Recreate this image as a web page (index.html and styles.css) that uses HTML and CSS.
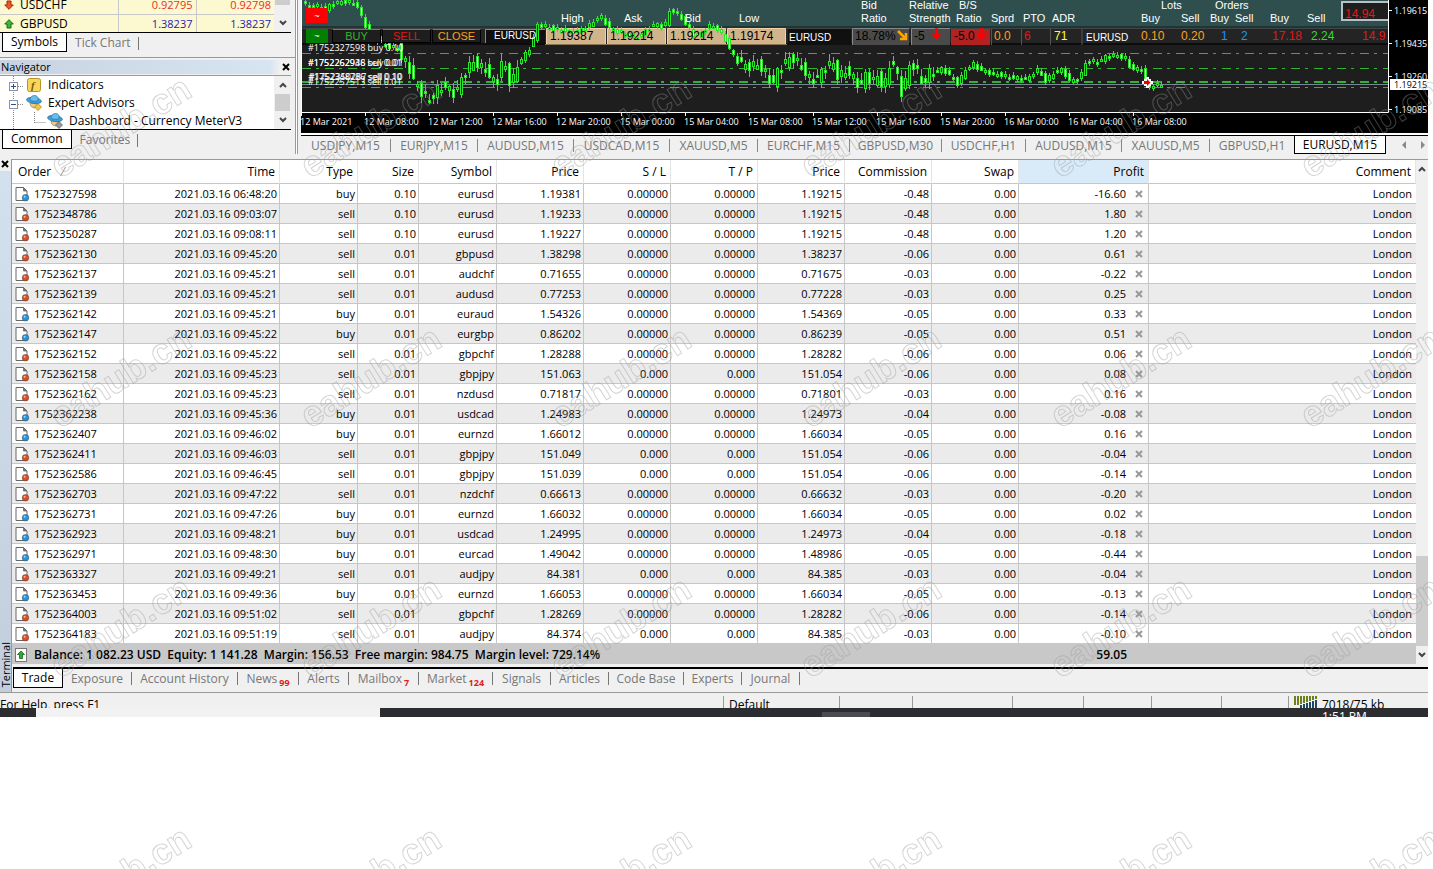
FILE: index.html
```html
<!DOCTYPE html>
<html lang="en">
<head>
<meta charset="utf-8">
<title>Trading terminal</title>
<link rel="stylesheet" href="styles.css">
</head>
<body>
<svg class="defs" aria-hidden="true">
  <symbol id="up" viewBox="0 0 10 10"><path d="M5 .7 9.3 5H7v4H3V5H.7z" fill="#3db53d" stroke="#176b17"/></symbol>
  <symbol id="down" viewBox="0 0 10 10"><path d="M5 9.3 .7 5H3V1h4v4h2.300z" fill="#f0542a" stroke="#a02808"/></symbol>
  <symbol id="chev-up" viewBox="0 0 8 6"><path d="M1 5 4 2 7 5" fill="none" stroke="#444" stroke-width="2"/></symbol>
  <symbol id="chev-down" viewBox="0 0 8 6"><path d="M1 1 4 4 7 1" fill="none" stroke="#444" stroke-width="2"/></symbol>
  <symbol id="close" viewBox="0 0 8 8"><path d="M1 1 7 7M7 1 1 7" fill="none" stroke="currentColor" stroke-width="2"/></symbol>
  <symbol id="advisor" viewBox="0 0 16 16">
    <path d="M4 8c0 3 2 5 5 5l3-5z" fill="#e8c98a" stroke="#8f7440" stroke-width=".6"/>
    <ellipse cx="8" cy="5.500" rx="7.500" ry="3" transform="rotate(8 8 5.500)" fill="#3f9fd6" stroke="#1f6d9d" stroke-width=".7"/>
    <path d="M4 5c0-3 2-4.500 4.500-4.500S12.500 2 12 5.500C10 6.800 6 6.600 4 5z" fill="#68bdeb" stroke="#1f6d9d" stroke-width=".6"/>
  </symbol>
  <symbol id="order" viewBox="0 0 15 16">
    <path d="M1 1.500h7.500L12 5v9.500H1z" fill="#fff" stroke="#666"/>
    <path d="M8.500 1.500V5H12z" fill="#777" stroke="#666" stroke-width=".8"/>
    <circle cx="10.500" cy="11.800" r="3.300" fill="currentColor" stroke="#444" stroke-width=".5"/>
    <circle cx="9.600" cy="10.700" r="1" fill="#fff" opacity=".6"/>
  </symbol>
</svg>

<div class="app">
  <div class="upper">
    <aside class="side">
      <section class="watch">
        <div class="pane">
          <table class="quotes">
            <colgroup><col><col class="q"><col class="q"></colgroup>
            <tr class="red"><th scope="row"><svg class="i10"><use href="#down"/></svg>USDCHF</th><td>0.92795</td><td>0.92798</td></tr>
            <tr class="blue"><th scope="row"><svg class="i10"><use href="#up"/></svg>GBPUSD</th><td>1.38237</td><td>1.38237</td></tr>
          </table>
          <div class="scroll"><span class="thumb short"></span><button aria-label="Scroll down"><svg class="chev"><use href="#chev-down"/></svg></button></div>
        </div>
        <nav class="tabs"><button class="on">Symbols</button><button>Tick Chart</button></nav>
      </section>
      <section class="navigator">
        <header><h2>Navigator</h2><button aria-label="Close navigator"><svg class="i8"><use href="#close"/></svg></button></header>
        <div class="pane">
          <div class="tree">
            <div class="node"><svg class="branch" viewBox="0 0 26 18"><path d="M13.500 0V18M18 10.500h6" class="dots"/><rect x="9.500" y="6.500" width="8" height="8" fill="#fff" stroke="#8a94a8"/><path d="M11 10.500h5M13.500 8v5" stroke="#33507f"/></svg><svg class="i16" viewBox="0 0 16 16"><rect x="1.500" y="1.500" width="13" height="13" rx="2" fill="#f7d65c" stroke="#b8912a"/><text x="5" y="12" class="fx">f</text></svg><span>Indicators</span></div>
            <div class="node"><svg class="branch" viewBox="0 0 26 18"><path d="M13.500 0V18M18 10.500h6" class="dots"/><rect x="9.500" y="6.500" width="8" height="8" fill="#fff" stroke="#8a94a8"/><path d="M11 10.500h5" stroke="#33507f"/></svg><svg class="i16" viewBox="0 0 16 16"><use href="#advisor"/><path d="M12 8.500 15.500 12 12 15.500 8.500 12z" fill="#f3c544" stroke="#a07b16" stroke-width=".7"/></svg><span>Expert Advisors</span></div>
            <div class="node"><svg class="branch deep" viewBox="0 0 47 18"><path d="M13.500 0V18M34.500 0V11M34.500 10.500h11" class="dots"/></svg><svg class="i16" viewBox="0 0 16 16"><use href="#advisor"/><path d="M12 8.500 15.500 12 12 15.500 8.500 12z" fill="#999" stroke="#555" stroke-width=".7"/></svg><span>Dashboard - Currency MeterV3</span></div>
          </div>
          <div class="scroll"><button aria-label="Scroll up"><svg class="chev"><use href="#chev-up"/></svg></button><span class="thumb"></span><button aria-label="Scroll down"><svg class="chev"><use href="#chev-down"/></svg></button></div>
        </div>
        <nav class="tabs"><button class="on">Common</button><button>Favorites</button></nav>
      </section>
    </aside>

    <main class="charts">
      <div class="chart">
        <svg class="plot" width="1127" height="133" viewBox="301 0 1127 133">
          <rect x="301" y="0" width="1127" height="133" fill="#000"/>
          <rect x="302" y="0" width="1086" height="112" fill="#1e1e1e"/>
          <rect x="302" y="0" width="1086" height="27" fill="#2f4f4f"/>
          <rect x="302" y="26" width="1086" height="2" fill="#1f3636"/>
          <rect x="302" y="28" width="1086" height="16" fill="#242424"/>
          <path d="M302 28.500H1388" stroke="#444"/>
          <path d="M302 44H1388" stroke="#0c0c0c" stroke-width="2"/>
          <g class="order-lines"><path d="M302 53.500H1388M302 68.500H1388M302 87.500H1388"/><path d="M302 82H1388" stroke-width="2"/></g>
          <path d="M302 84.500H1388" stroke="#778899"/>
          <g fill="#d2b48c" stroke="#f0d2a6"><path d="M546.500 28.500h59v16h-59zM607.500 28.500h58v16h-58zM667.500 28.500h58v16h-58zM727.500 28.500h58v16h-58z"/></g>
          <path d="M545 44.500H787" stroke="#8a7454"/>
          <path d="M486 29h59v14h-59zM788 29h63v16h-63z" fill="#101010"/>
          <path d="M852 29h57v16h-57zM912 29h38v16h-38z" fill="#4a4a4a"/>
          <path d="M852.500 45V28.500H909M911.500 45V28.500H950" fill="none" stroke="#888"/>
          <path d="M951 29h39v16h-39z" fill="#b22222"/>
          <path d="M991.500 29V45M1021.500 29V45M1050.500 29V45M1082 29V45" stroke="#555"/>
          <path d="M485.500 43V29.500H545" fill="none" stroke="#888"/>
          <g id="candles"></g>
          <path d="M301.500 0V112.500H1388.500V0" class="frame"/>
          <g class="head">
            <text x="561" y="22">High</text><text x="624" y="22">Ask</text><text x="685" y="22">Bid</text><text x="739" y="22">Low</text>
            <text x="861" y="9">Bid</text><text x="861" y="22">Ratio</text><text x="909" y="9">Relative</text><text x="909" y="22">Strength</text>
            <text x="959" y="9">B/S</text><text x="956" y="22">Ratio</text><text x="991" y="22">Sprd</text><text x="1023" y="22">PTO</text><text x="1052" y="22">ADR</text>
            <text x="1161" y="9">Lots</text><text x="1215" y="9">Orders</text><text x="1141" y="22">Buy</text><text x="1181" y="22">Sell</text><text x="1210" y="22">Buy</text><text x="1235" y="22">Sell</text><text x="1270" y="22">Buy</text><text x="1307" y="22">Sell</text>
          </g>
          <g class="pair"><text x="494" y="39">EURUSD</text><text x="789" y="41">EURUSD</text><text x="1086" y="41">EURUSD</text></g>
          <g class="val">
            <text x="550" y="40">1.19387</text><text x="610" y="40">1.19214</text><text x="670" y="40">1.19214</text><text x="730" y="40">1.19174</text>
            <text x="855" y="40">18.78%</text><text x="914" y="40">-5</text><text x="954" y="40">-5.0</text>
            <text x="994" y="40" class="orange">0.0</text><text x="1024" y="40" class="crimson">6</text><text x="1054" y="40" class="yellow">71</text>
            <text x="1141" y="40" class="orange">0.10</text><text x="1181" y="40" class="orange">0.20</text><text x="1221" y="40" class="azure">1</text><text x="1241" y="40" class="azure">2</text>
            <text x="1272" y="40" class="crimson">17.18</text><text x="1311" y="40" class="lime">2.24</text><text x="1362" y="40" class="crimson">14.9</text>
          </g>
          <path d="M898 31 905 38M906 33V39H900" fill="none" stroke="#ffa500" stroke-width="2.500"/>
          <path d="M936.500 28V37M933 34 936.500 38 940 34M981.500 28V37M978 34 981.500 38 985 34" fill="none" stroke="#f00" stroke-width="2.500"/>
          <rect x="1342" y="2" width="48" height="18" fill="#1e1e1e" stroke="#b9bfc6" stroke-width="2"/>
          <rect x="1389" y="0" width="39" height="132" fill="#000"/>
          <path d="M1388.500 0V112" class="frame"/>
          <text x="1345" y="18" class="val crimson">14.94</text>
          <g class="tiny">
            <text x="308" y="51">#1752327598 buy 0.10</text>
            <text x="308" y="66">#1752262938 buy 0.01</text><text x="308" y="66">#1752262946 sell 0.01</text>
            <text x="308" y="80">#1752348786 sell 0.10</text><text x="309" y="80">#1752350287 sell 0.10</text><text x="308" y="85">#1752257513 sell 0.01</text>
          </g>
          <path d="M1142 81h2v-2h2v-2h3v2h2v2h2v3h-2v2h-2v2h-3v-2h-2v-2h-2z" fill="#fff"/><path d="M1144 81h3v-2l3.500 3.500-3.500 3.500v-2h-3z" fill="#e00"/>
          <g class="tiny" id="times"></g>
          <path d="M1389 10.500h3M1389 43.500h3M1389 76.500h3M1389 109.500h3" stroke="#fff"/>
          <g class="tiny"><text x="1394" y="14">1.19615</text><text x="1394" y="47">1.19435</text><text x="1394" y="80">1.19260</text><text x="1394" y="113">1.19085</text></g>
          <rect x="1390" y="79" width="38" height="11" fill="#fff"/><text x="1394" y="88" class="tiny dark">1.19215</text>
        </svg>
        <button class="toggle red-bg">~</button>
        <div class="trade-bar"><button class="toggle green-bg">~</button><button class="lime">BUY</button><button class="crimson">SELL</button><button class="orange">CLOSE</button></div>
      </div>
      <nav class="chart-tabs">
        <button>USDJPY,M15</button><button>EURJPY,M15</button><button>AUDUSD,M15</button><button>USDCAD,M15</button><button>XAUUSD,M5</button><button>EURCHF,M15</button><button>GBPUSD,M30</button><button>USDCHF,H1</button><button>AUDUSD,M15</button><button>XAUUSD,M5</button><button class="last">GBPUSD,H1</button><button class="on">EURUSD,M15</button>
        <svg class="arrows" viewBox="0 0 26 8"><path d="M4 0V8L0 4zM19 0V8L23 4z" fill="#888"/></svg>
      </nav>
    </main>
  </div>

  <section class="terminal">
    <div class="grip"><button aria-label="Close terminal"><svg class="i8"><use href="#close"/></svg></button><span>Terminal</span></div>
    <div class="body">
      <div class="grid-wrap">
        <table class="orders">
          <colgroup><col class="c-order"><col class="c-time"><col class="c-mid"><col class="c-size"><col class="c-mid"><col class="c-num"><col class="c-num"><col class="c-num"><col class="c-num"><col class="c-num"><col class="c-num"><col class="c-profit"><col></colgroup>
          <thead><tr><th>Order <span class="sort">⁄</span></th><th>Time</th><th>Type</th><th>Size</th><th>Symbol</th><th>Price</th><th>S / L</th><th>T / P</th><th>Price</th><th>Commission</th><th>Swap</th><th class="picked">Profit</th><th>Comment</th></tr></thead>
          <tbody id="rows"></tbody>
          <tfoot><tr><td colspan="11"><svg class="i14" viewBox="0 0 13 14"><rect x=".5" y=".5" width="11" height="13" fill="#fff" stroke="#777"/><path d="M6 3 9.500 6.500H7.500V10.500H4.500V6.500H2.500z" fill="#2fae2f" stroke="#126112" stroke-width=".8"/></svg><span>Balance: 1 082.23 USD&nbsp; Equity: 1 141.28&nbsp; Margin: 156.53&nbsp; Free margin: 984.75&nbsp; Margin level: 729.14%</span></td><td class="sum">59.05</td><td></td></tr></tfoot>
        </table>
        <div class="scroll tall"><button aria-label="Scroll up"><svg class="chev"><use href="#chev-up"/></svg></button><span class="thumb"></span><button aria-label="Scroll down"><svg class="chev"><use href="#chev-down"/></svg></button></div>
      </div>
      <nav class="term-tabs">
        <button class="on">Trade</button><button>Exposure</button><button>Account History</button><button>News<sub>99</sub></button><button>Alerts</button><button>Mailbox<sub>7</sub></button><button>Market<sub>124</sub></button><button>Signals</button><button>Articles</button><button>Code Base</button><button>Experts</button><button>Journal</button>
      </nav>
    </div>
  </section>

  <footer class="status"><span>For Help, press F1</span><span>Default</span><span></span><span></span><span></span><span></span><span></span><span></span><span class="net"><svg width="24" height="12" viewBox="0 0 24 12"><path d="M1 0V9M4 0V9M7 0V8M10 0V7M13 0V6M16 0V5M19 0V4M22 0V3" stroke="#6b7f1a" stroke-width="2"/><path d="M7 9V12M10 8V12M13 7V12M16 6V12M19 5V12M22 4V12" stroke="#1c4a66" stroke-width="2"/></svg>7018/75 kb</span></footer>
  <div class="taskbar"><div class="search"></div><div class="apps"><svg width="640" height="9" viewBox="380 0 640 9"><path d="M497 9a6 4 0 0 1 12 0z" fill="#5fc4d6"/><path d="M595 8h11v1h-11z" fill="#ddd"/><path d="M785 8h24v1h-24zM882 8h24v1h-24z" fill="#000"/><path d="M822 0h48v9h-48z" fill="#4a4d50"/><path d="M841 8h9v1h-9z" fill="#ccc"/><path d="M932 8h24v1h-24z" fill="#6a7d4a"/></svg></div><time>1:51 PM</time></div>
</div>

<svg class="marks" aria-hidden="true">
  <defs><pattern id="mark" x="30" y="0" width="250" height="250" patternUnits="userSpaceOnUse"><text transform="translate(30 179) rotate(-32)">eahub.cn</text></pattern></defs>
  <rect width="100%" height="100%" fill="url(#mark)"/>
</svg>
<script src="app.js"></script>
</body>
</html>
```
FILE: styles.css
```css
* { box-sizing: border-box; }
body { margin: 0; position: relative; min-height: 100vh; background: #fff; color: #000; font: 11px/18px "Open Sans", "Noto Sans", sans-serif; overflow: hidden; }
button { font: inherit; color: inherit; background: none; border: 0; padding: 0; margin: 0; }
table { border-collapse: collapse; table-layout: fixed; width: 100%; }
th { font-weight: 400; }
.defs { position: absolute; width: 0; height: 0; }
.app { padding-right: 5px; }
.i8 { width: 8px; height: 8px; display: block; }
.i10 { width: 10px; height: 10px; }
.i14 { width: 13px; height: 14px; }
.i16 { width: 16px; height: 16px; }
.chev { width: 8px; height: 6px; display: block; }

.upper { display: flex; background: #f0f0f0; }
.side { width: 297px; flex: none; border-right: 1px solid #fff; box-shadow: inset -1px 0 #999; overflow: hidden; }
.watch { padding-right: 5px; border-bottom: 1px solid #999; height: 58px; }
.pane { display: flex; border-bottom: 1px solid #000; background: #fff; overflow: hidden; }
.watch .pane { height: 33px; align-items: flex-end; background: #fcf8d0; }
.quotes { flex: 1; background: #fcf8d0; }
.quotes .q { width: 78px; }
.quotes tr { height: 18px; }
.quotes th { padding: 0 0 0 4px; text-align: left; font-size: 12px; line-height: 17px; white-space: nowrap; }
.quotes th svg { margin-right: 6px; vertical-align: -1px; }
.quotes td { padding: 0 3px 0 0; text-align: right; line-height: 17px; border-left: 1px solid #c8c8c8; }
.quotes tr + tr > * { border-top: 1px solid #c8c8c8; }
.red td { color: #e8301c; }
.blue td { color: #2518b8; }
.scroll { width: 17px; flex: none; align-self: stretch; background: #f0f0f0; display: flex; flex-direction: column; align-items: center; justify-content: space-between; }
.scroll button { height: 18px; width: 100%; display: grid; place-items: center; }
.scroll .thumb { width: 15px; height: 17px; background: #cdcdcd; }
.scroll .short { height: 5px; }
.tabs { display: flex; padding-left: 2px; font-size: 12px; line-height: 18px; color: #777; }
.tabs button { padding: 0 8px; position: relative; }
.tabs button:not(.on)::after { content: ""; position: absolute; right: 0; top: 4px; bottom: 2px; border-right: 1px solid #777; }
.on { background: #fff; color: #000; border: 1px solid #000; border-top: 0; }
.navigator header { display: flex; align-items: center; justify-content: space-between; margin: 2px 0 1px; height: 14px; background: linear-gradient(90deg, #c7d3e1, #d7e4f2 270px, #f0f0f0 280px); }
.navigator { padding-right: 5px; }
.navigator header button { padding: 0 1px; }
.navigator h2 { margin: 0; padding-left: 1px; font: 11px/14px "Open Sans", sans-serif; }
.navigator .pane { height: 55px; border-top: 1px solid #999; }
.tree { flex: 1; }
.node { display: flex; align-items: center; height: 18px; font-size: 12px; white-space: nowrap; }
.node span { padding-left: 6px; }
.branch { width: 26px; height: 18px; }
.branch.deep { width: 47px; }
.dots { fill: none; stroke: #888; stroke-dasharray: 1 1; }
.fx { font: italic bold 11px "Liberation Serif", serif; fill: #7a5a00; }

.charts { flex: 1; min-width: 0; padding-left: 3px; border-left: 1px solid #999; }
.chart { position: relative; overflow: hidden; border-bottom: 2px solid #fff; background: #000; }
.plot { display: block; }
.frame { fill: none; stroke: #fff; }
.order-lines { stroke: #32b432; stroke-dasharray: 9 5 3 6; }
.head { font: 11px "Liberation Sans", sans-serif; fill: #fff; }
.pair { font: 10px "Liberation Sans", sans-serif; fill: #fff; }
.val { font: 12px "Liberation Sans", sans-serif; fill: #000; }
.tiny { font: 9px "Open Sans", sans-serif; fill: #fff; }
.dark { fill: #000; }
.lime { fill: #32dc32; color: #32b432; }
.crimson { fill: #e01818; color: #e01818; }
.orange { fill: #ffa01e; color: #ffa01e; }
.yellow { fill: #ffff28; }
.azure { fill: #1e90ff; }
.trade-bar { position: absolute; left: 5px; top: 29px; display: flex; gap: 1px; }
.trade-bar button { width: 49px; height: 14px; background: #1e1e1e; border: 1px solid #000; border-top-color: #777; font: 11px/11px "Liberation Sans", sans-serif; }
.chart .toggle { width: 22px; height: 14px; color: #fff; border: 0; font: 9px/12px "Liberation Sans", sans-serif; }
.trade-bar .toggle { margin-right: 3px; }
.chart > .toggle { position: absolute; left: 5px; top: 8px; height: 15px; }
.chart .red-bg { background: #f00; }
.chart .green-bg { background: #008000; }
.chart-tabs { display: grid; grid-template-columns: 90px 87px 96px 96px 88px 92px 92px 84px 96px 88px 84px 92px 1fr; align-items: center; border-top: 1px solid #000; height: 19px; font-size: 12px; color: #777; white-space: nowrap; }
.chart-tabs button { line-height: 13px; border-right: 1px solid #888; }
.chart-tabs .last { border: 0; }
.chart-tabs .on { line-height: 17px; border: 1px solid #000; border-top: 0; }
.arrows { width: 26px; height: 8px; justify-self: end; }

.terminal { display: flex; border-top: 5px solid #f0f0f0; background: #f0f0f0; }
.grip { width: 11px; flex: none; background: linear-gradient(#f0f0f0 12px, #d3e1ef 12px, #c3cedc); display: flex; flex-direction: column; justify-content: space-between; align-items: center; padding-bottom: 5px; }
.grip button { padding: 1px 2px 0 0; }
.grip span { writing-mode: vertical-rl; transform: rotate(180deg); line-height: 11px; }
.body { flex: 1; min-width: 0; border-left: 1px solid #999; }
.grid-wrap { display: flex; border-top: 1px solid #999; background: #fff; }
.orders { flex: 1; width: auto; min-width: 0; white-space: nowrap; border-collapse: separate; border-spacing: 0; }
.c-order { width: 112px; } .c-time { width: 156px; } .c-mid { width: 78px; } .c-size { width: 61px; } .c-num { width: 87px; } .c-profit { width: 130px; }
.orders th { height: 24px; padding: 0 4px; text-align: right; font-size: 12px; line-height: 22px; border-right: 1px solid #e5e5e5; border-bottom: 1px solid #c6c6c6; }
.orders th:first-child { text-align: left; padding-left: 6px; }
.sort { color: #888; padding-left: 8px; }
.orders .picked { background: #d9ebf9; }
.orders td { height: 20px; padding: 0 2px; text-align: right; line-height: 19px; border-right: 1px solid #c6c6c6; border-bottom: 1px solid #c6c6c6; }
.orders td:last-child { padding-right: 4px; border-right: 0; }
.orders tbody tr:nth-child(even) { background: #ebebeb; }
.orders tbody tr:last-child td { border-bottom-color: #c8c8c8; }
.orders td:first-child { text-align: left; padding-left: 3px; }
.orders .ord { width: 15px; height: 16px; margin: 2px 4px 0 0; vertical-align: top; }
.buy { color: #1e96e6; }
.sell { color: #e8481c; }
.orders .money button { display: inline-grid; place-items: center; height: 19px; margin: 0 3px 0 9px; vertical-align: top; color: #999; }
.orders tfoot tr { background: #c8c8c8; }
.orders tfoot td { border: 0; font-weight: 600; font-size: 12px; }
.orders tfoot svg { margin: 3px 6px 0 0; vertical-align: top; }
.orders .sum { padding-right: 22px; }
.tall { width: 12px; }
.tall .thumb { width: 12px; height: 90px; margin-top: auto; }
.term-tabs { display: grid; grid-template-columns: 50px 69px 106px 61px 50px 70px 74px 58px 58px 75px 58px 58px; margin: 3px 0 4px 1px; border-top: 2px solid #000; font-size: 12px; line-height: 13px; align-items: center; color: #777; white-space: nowrap; height: 21px; }
.term-tabs button { height: 13px; border-right: 1px solid #777; }
.term-tabs .on { height: auto; line-height: 18px; border: 1px solid #000; border-top: 0; }
.term-tabs sub { font: bold 9px/9px "Open Sans", sans-serif; color: #d22; vertical-align: -3px; padding-left: 2px; }

.status { display: grid; grid-template-columns: 723px 116px 73px 100px 71px 68px 70px 67px 1fr; height: 16px; padding-top: 3px; overflow: hidden; background: #f0f0f0; border-top: 1px solid #999; font-size: 12px; line-height: 18px; }
.status span + span { border-left: 1px solid #999; padding-left: 5px; }
.net { display: flex; gap: 4px; }
.taskbar { display: flex; height: 9px; padding-left: 36px; background: #2b2d31; overflow: hidden; }
.search { width: 344px; background: #f2f2f2; }
.apps { flex: 1; overflow: hidden; }
.taskbar time { width: 106px; color: #fff; font-size: 12px; line-height: 18px; }

.marks { position: absolute; inset: 0; width: 100%; height: 100%; pointer-events: none; }
.marks text { font: bold 36px "Liberation Sans", sans-serif; fill: none; stroke: #969696; stroke-opacity: .4; stroke-width: 1; }
```
FILE: app.js
```js
const orders = `1752327598|06:48:20|buy|0.10|eurusd|1.19381|1.19215|-0.48|-16.60
1752348786|09:03:07|sell|0.10|eurusd|1.19233|1.19215|-0.48|1.80
1752350287|09:08:11|sell|0.10|eurusd|1.19227|1.19215|-0.48|1.20
1752362130|09:45:20|sell|0.01|gbpusd|1.38298|1.38237|-0.06|0.61
1752362137|09:45:21|sell|0.01|audchf|0.71655|0.71675|-0.03|-0.22
1752362139|09:45:21|sell|0.01|audusd|0.77253|0.77228|-0.03|0.25
1752362142|09:45:21|buy|0.01|euraud|1.54326|1.54369|-0.05|0.33
1752362147|09:45:22|buy|0.01|eurgbp|0.86202|0.86239|-0.05|0.51
1752362152|09:45:22|sell|0.01|gbpchf|1.28288|1.28282|-0.06|0.06
1752362158|09:45:23|sell|0.01|gbpjpy|151.063|151.054|-0.06|0.08
1752362162|09:45:23|sell|0.01|nzdusd|0.71817|0.71801|-0.03|0.16
1752362238|09:45:36|buy|0.01|usdcad|1.24983|1.24973|-0.04|-0.08
1752362407|09:46:02|buy|0.01|eurnzd|1.66012|1.66034|-0.05|0.16
1752362411|09:46:03|sell|0.01|gbpjpy|151.049|151.054|-0.06|-0.04
1752362586|09:46:45|sell|0.01|gbpjpy|151.039|151.054|-0.06|-0.14
1752362703|09:47:22|sell|0.01|nzdchf|0.66613|0.66632|-0.03|-0.20
1752362731|09:47:26|buy|0.01|eurnzd|1.66032|1.66034|-0.05|0.02
1752362923|09:48:21|buy|0.01|usdcad|1.24995|1.24973|-0.04|-0.18
1752362971|09:48:30|buy|0.01|eurcad|1.49042|1.48986|-0.05|-0.44
1752363327|09:49:21|sell|0.01|audjpy|84.381|84.385|-0.03|-0.04
1752363453|09:49:36|buy|0.01|eurnzd|1.66053|1.66034|-0.05|-0.13
1752364003|09:51:02|sell|0.01|gbpchf|1.28269|1.28282|-0.06|-0.14
1752364183|09:51:19|sell|0.01|audjpy|84.374|84.385|-0.03|-0.10`;

document.getElementById('rows').innerHTML = orders.split('\n').map(line => {
  const [id, time, type, size, symbol, open, price, fee, profit] = line.split('|');
  const zero = symbol.endsWith('jpy') ? '0.000' : '0.00000';
  const cells = ['2021.03.16 ' + time, type, size, symbol, open, zero, zero, price, fee, '0.00'];
  return `<tr><td><svg class="ord ${type}"><use href="#order"/></svg>${id}</td>` +
    cells.map(c => `<td>${c}</td>`).join('') +
    `<td class="money">${profit}<button aria-label="Close order ${id}"><svg class="i8"><use href="#close"/></svg></button></td><td>London</td></tr>`;
}).join('');

const labels = ['12 Mar 2021', '12 Mar 08:00', '12 Mar 12:00', '12 Mar 16:00', '12 Mar 20:00', '15 Mar 00:00', '15 Mar 04:00',
  '15 Mar 08:00', '15 Mar 12:00', '15 Mar 16:00', '15 Mar 20:00', '16 Mar 00:00', '16 Mar 04:00', '16 Mar 08:00'];
document.getElementById('times').innerHTML = labels.map((t, i) =>
  `<path d="M${301.5 + 64 * i} 112v4" stroke="#fff"/><text x="${300 + 64 * i}" y="125">${t}</text>`).join('');

// Price path as x,y pairs; one bar every four units.
const path = [[305,1],[309,4],[313,7],[318,5],[328,9],[336,3],[350,1],[358,4],[362,6],[366,20],[370,27],[378,38],[390,46],[402,48],[406,60],
  [412,66],[418,82],[422,88],[428,95],[434,101],[438,93],[444,87],[450,86],[454,92],[460,92],[464,81],[468,73],[474,65],[478,60],
  [484,68],[490,68],[494,79],[500,83],[505,64],[510,68],[514,85],[518,76],[522,62],[526,57],[532,50],[536,42],[540,25],[548,25],
  [560,29],[576,32],[588,28],[597,22],[603,14],[608,22],[616,29],[628,34],[640,37],[650,30],[656,24],[668,26],[674,8],[680,12],
  [690,24],[696,35],[704,34],[712,25],[722,28],[730,42],[738,58],[748,66],[756,65],[762,64],[770,75],[776,84],[781,72],[786,64],
  [796,56],[804,66],[814,80],[822,77],[830,65],[838,64],[842,78],[850,70],[858,80],[864,86],[870,73],[876,83],[880,74],[888,88],
  [892,66],[898,62],[902,82],[906,94],[910,76],[915,61],[920,70],[926,85],[932,73],[946,68],[954,76],[962,84],[968,70],[976,63],
  [984,70],[1000,74],[1020,78],[1032,78],[1040,68],[1050,81],[1058,71],[1066,69],[1074,82],[1084,76],[1090,60],[1100,62],
  [1112,55],[1128,56],[1134,68],[1146,70],[1150,88],[1154,89],[1158,83],[1162,85]];
const at = x => {
  const i = Math.max(1, path.findIndex(p => p[0] >= x));
  const [a, b] = [path[i - 1], path[i]];
  return a[1] + (b[1] - a[1]) * (x - a[0]) / (b[0] - a[0]);
};
let bars = '';
for (let x = 305, n = 0; x < 1162; x += 4, n++) {
  const swing = (x > 400 && x < 520) || (x > 740 && x < 935) ? 5 : 2;
  const wave = k => Math.sin(n * 2.3 + k) * swing;
  const a = at(x) + wave(0), b = at(Math.min(x + 4, 1162)) - wave(1);
  const top = Math.round(Math.min(a, b)), height = Math.max(2, Math.round(Math.abs(a - b)));
  const up = 1 + Math.abs(wave(2)) * 1.2, low = 1 + Math.abs(wave(4)) * 1.2;
  bars += `<path d="M${x + .5} ${Math.round(top - up)}V${Math.round(top + height + low)}" stroke="#28e628"/>` +
    `<rect x="${x - .5}" y="${top + .5}" width="2" height="${height}" fill="${b > a ? '#d8ffd8' : '#1e1e1e'}" stroke="#28e628"/>`;
}
document.getElementById('candles').innerHTML = bars;
```
